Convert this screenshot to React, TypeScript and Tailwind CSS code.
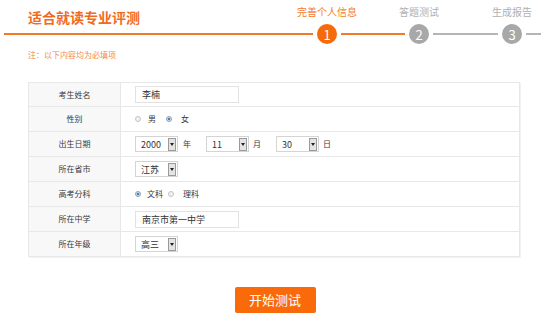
import React from 'react';

const FONT = { fontFamily: '"Noto Sans CJK SC", "Noto Sans", sans-serif' };

const Radio = ({ checked }: { checked?: boolean }) =>
  checked ? (
    <span className="flex h-[6px] w-[6px] items-center justify-center rounded-full border border-[#8fa6bd] bg-[#c9d8e6]">
      <span className="h-[2px] w-[2px] rounded-full bg-[#2b5f8f]" />
    </span>
  ) : (
    <span className="h-[6px] w-[6px] rounded-full border border-[#c4c4c4] bg-[#f1f1f1]" />
  );

const Select = ({ value }: { value: string }) => (
  <div className="flex h-[16px] w-[43px] items-center border border-[#d4d4d4] bg-white">
    <span className="flex-1 pl-[5px] text-[9px] leading-none text-[#333]">{value}</span>
    <span className="mr-px flex h-[13px] w-[8px] items-center justify-center border border-[#9a9a9a] bg-[#e4e4e4]">
      <span className="h-0 w-0 border-x-[2px] border-t-[3px] border-x-transparent border-t-[#222]" />
    </span>
  </div>
);

const Input = ({ value }: { value: string }) => (
  <div className="flex h-[17px] w-[104px] items-center border border-[#e2e2e2] bg-white pl-[6px] text-[9px] leading-none text-[#333]">
    {value}
  </div>
);

const Row = ({ label, short, children }: { label: string; short?: boolean; children: React.ReactNode }) => (
  <div className={`flex border-b border-[#e8e8e8] last:border-b-0 ${short ? 'h-[24px]' : 'h-[25px]'}`}>
    <div className="flex w-[92px] items-center justify-center border-r border-[#e8e8e8] bg-[#f8f8f8] text-[8px] text-[#3a3a3a]">
      {label}
    </div>
    <div className="flex flex-1 items-center pl-[14px] text-[8px] text-[#3a3a3a]">{children}</div>
  </div>
);

const Step = ({ n, label, active }: { n: number; label: string; active?: boolean }) => (
  <div className="flex w-[20px] flex-col items-center">
    <div
      className={`flex h-[24px] items-center whitespace-nowrap pb-[1px] text-[10px] ${active ? 'text-[#f47a2a]' : 'text-[#b0b0b0]'}`}
    >
      {label}
    </div>
    <div
      className={`flex h-[20px] w-[20px] items-center justify-center rounded-full text-[13px] leading-none text-white ${active ? 'bg-[#f56a0a]' : 'bg-[#a8a8a8]'}`}
    >
      {n}
    </div>
  </div>
);

const Connector = ({ w, orange }: { w: string; orange?: boolean }) => (
  <div className={`flex flex-col ${w}`}>
    <div className="h-[24px]" />
    <div className="flex h-[20px] items-center px-[4px]">
      <div className={`h-[1.5px] w-full ${orange ? 'bg-[#f47a2a]' : 'bg-[#b5b5b5]'}`} />
    </div>
  </div>
);

export default function App() {
  return (
    <div className="h-[316px] w-[550px] overflow-hidden bg-white" style={FONT}>
      {/* header with steps */}
      <div className="ml-[4px] mr-[5px] flex">
        <div className="flex flex-1 flex-col">
          <div className="flex h-[24px] items-end pl-[24px]">
            <span className="text-[14px] font-bold leading-[14px] text-[#f26b1d]">适合就读专业评测</span>
          </div>
          <div className="flex h-[20px] items-center pr-[4px]">
            <div className="h-[1.5px] w-full bg-[#f47a2a]" />
          </div>
        </div>
        <Step n={1} label="完善个人信息" active />
        <Connector w="w-[72px]" orange />
        <Step n={2} label="答题测试" />
        <Connector w="w-[73px]" />
        <Step n={3} label="生成报告" />
        <Connector w="w-[23px]" />
      </div>

      <p className="ml-[28px] mt-[6px] text-[8px] leading-[10px] text-[#f5894a]">注：以下内容均为必填项</p>

      {/* form table */}
      <div className="ml-[28px] mt-[22px] w-[492px] border border-[#e8e8e8] shadow-[1px_1px_0_#f2f2f2]">
        <Row label="考生姓名" short>
          <Input value="李楠" />
        </Row>
        <Row label="性别">
          <div className="flex items-center">
            <Radio />
            <span className="ml-[7px]">男</span>
            <span className="ml-[10px]" />
            <Radio checked />
            <span className="ml-[9px]">女</span>
          </div>
        </Row>
        <Row label="出生日期">
          <div className="flex items-center">
            <Select value="2000" />
            <span className="ml-[5px]">年</span>
            <span className="ml-[15px]" />
            <Select value="11" />
            <span className="ml-[4px]">月</span>
            <span className="ml-[15px]" />
            <Select value="30" />
            <span className="ml-[4px]">日</span>
          </div>
        </Row>
        <Row label="所在省市">
          <Select value="江苏" />
        </Row>
        <Row label="高考分科">
          <div className="flex items-center">
            <Radio checked />
            <span className="ml-[6px]">文科</span>
            <span className="ml-[5px]" />
            <Radio />
            <span className="ml-[9px]">理科</span>
          </div>
        </Row>
        <Row label="所在中学">
          <Input value="南京市第一中学" />
        </Row>
        <Row label="所在年级" short>
          <Select value="高三" />
        </Row>
      </div>

      <div className="mt-[30px] flex justify-center">
        <button className="h-[26px] w-[81px] rounded-[2px] bg-[#fa6a0a] text-[13px] text-white">开始测试</button>
      </div>
    </div>
  );
}
